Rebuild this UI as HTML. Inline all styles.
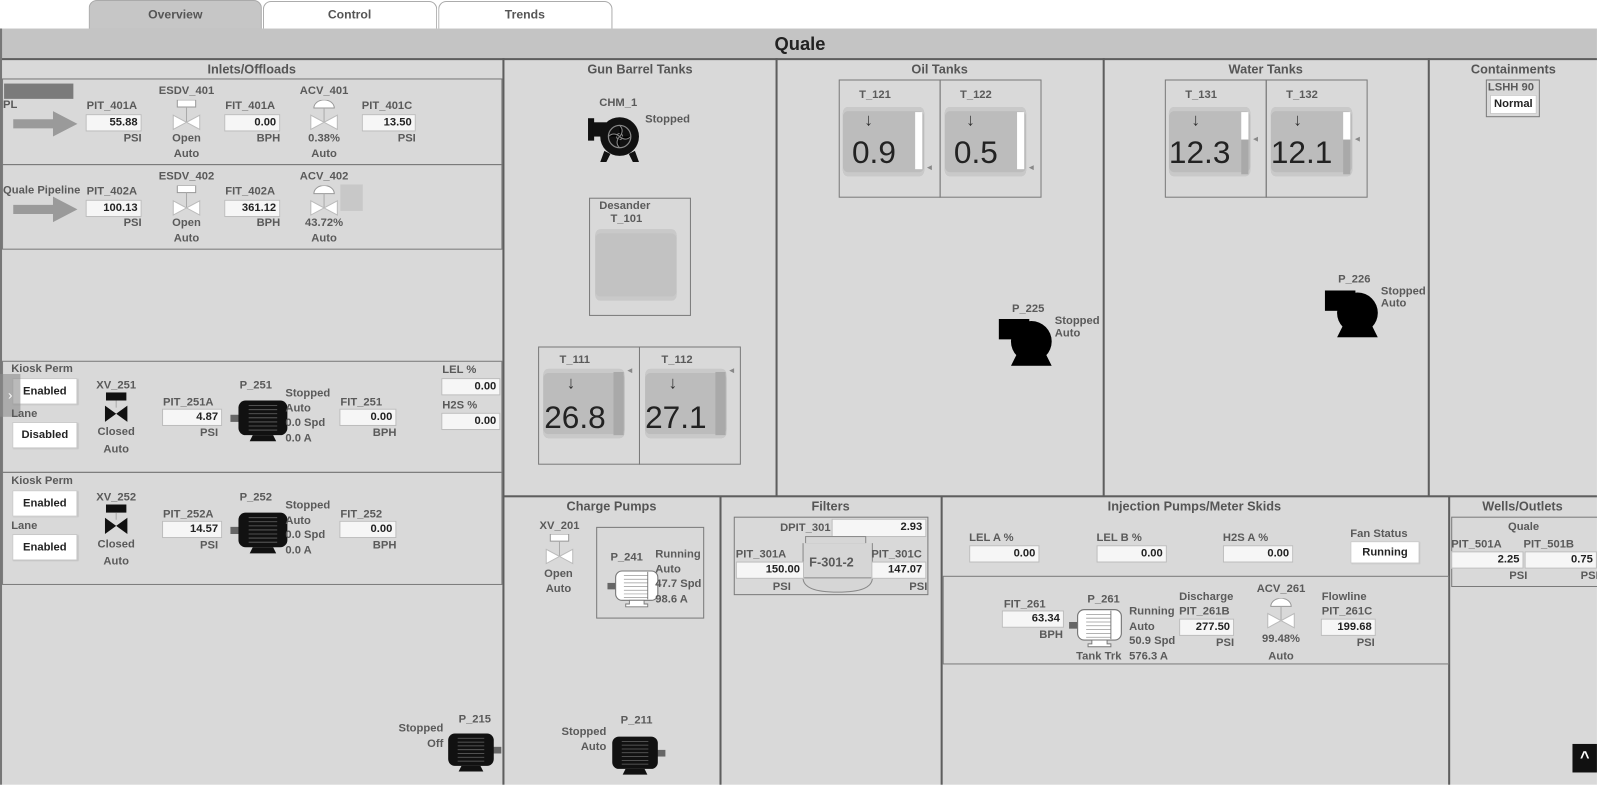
<!DOCTYPE html>
<html><head><meta charset="utf-8">
<style>
html,body{margin:0;padding:0;background:#fff;width:1597px;height:784px;overflow:hidden}
.c{position:absolute;left:0;top:0;width:1567px;height:770px;transform:scale(1.0191,1.0191);transform-origin:0 0;font-family:"Liberation Sans",sans-serif}
.t{position:absolute;font-weight:bold;font-size:11px;line-height:12px;color:#5a5a5a;white-space:nowrap}
.h{position:absolute;font-weight:bold;font-size:12.5px;color:#555;white-space:nowrap;transform:translateX(-50%)}
.ct{transform:translateX(-50%)}
.rt{transform:translateX(-100%)}
.b{position:absolute;background:#f6f6f6;border:1px solid #bcbcbc;box-sizing:border-box;font-weight:bold;font-size:11px;color:#222;text-align:right;padding-right:3px;line-height:14px;height:17px}
.btn{position:absolute;background:#fff;border:1px solid #c8c8c8;box-shadow:1px 1px 1px #bbb;box-sizing:border-box;font-weight:bold;font-size:11px;color:#222;text-align:center}
.ln{position:absolute;background:#5e5e5e}
.bx{position:absolute;border:1px solid #7a7a7a;box-sizing:border-box}
.tank{position:absolute;background:#bcbcbc;border-radius:5px/6px;box-shadow:inset 0 4px 0 #c9c9c9,inset 0 -4px 0 #c9c9c9}
.tv{position:absolute;font-size:31px;color:#222;line-height:31px}
.ar{position:absolute;font-size:17px;color:#333;line-height:17px}
svg{position:absolute;overflow:visible}
</style></head><body>
<svg width="0" height="0" style="position:absolute">
<defs>
<symbol id="mb" viewBox="0 0 60 44"><rect x="0" y="17" width="9" height="7" fill="#666"/><rect x="8" y="3" width="48" height="34" rx="7" fill="#111"/><g stroke="#666" stroke-width="0.8"><line x1="18" y1="8" x2="46" y2="8"/><line x1="18" y1="12" x2="46" y2="12"/><line x1="18" y1="16" x2="46" y2="16"/><line x1="18" y1="20" x2="46" y2="20"/><line x1="18" y1="24" x2="46" y2="24"/><line x1="18" y1="28" x2="46" y2="28"/><line x1="18" y1="32" x2="46" y2="32"/></g><path d="M22 37h20l3 6H19z" fill="#111"/></symbol>
<symbol id="mw" viewBox="0 0 60 44"><rect x="0" y="17" width="9" height="7" fill="#666"/><rect x="9" y="4" width="46" height="32" rx="7" fill="#fff" stroke="#777" stroke-width="1.2"/><g stroke="#999" stroke-width="0.8"><line x1="18" y1="9" x2="44" y2="9"/><line x1="18" y1="13" x2="44" y2="13"/><line x1="18" y1="17" x2="44" y2="17"/><line x1="18" y1="21" x2="44" y2="21"/><line x1="18" y1="25" x2="44" y2="25"/><line x1="18" y1="29" x2="44" y2="29"/><line x1="18" y1="33" x2="44" y2="33"/></g><line x1="44" y1="5" x2="44" y2="35" stroke="#777"/><path d="M24 36h16v4h4v3H20v-3h4z" fill="#fff" stroke="#777"/></symbol>
<symbol id="pc" viewBox="0 0 54 46"><rect x="0" y="0" width="30" height="20" fill="#000"/><circle cx="32" cy="22" r="20" fill="#000"/><path d="M18 34h28l6 12H12z" fill="#000"/></symbol>
<symbol id="vw" viewBox="0 0 28 30"><rect x="5" y="0" width="18" height="7" fill="#fff" stroke="#999"/><line x1="14" y1="7" x2="14" y2="22" stroke="#aaa"/><path d="M1 15L14 22L1 29z M27 15L14 22L27 29z" fill="#fff" stroke="#bbb"/></symbol>
<symbol id="va" viewBox="0 0 28 30"><path d="M4 8A10 8 0 0 1 24 8z" fill="#fff" stroke="#999"/><line x1="14" y1="8" x2="14" y2="22" stroke="#aaa"/><path d="M1 15L14 22L1 29z M27 15L14 22L27 29z" fill="#fff" stroke="#bbb"/></symbol>
<symbol id="vb" viewBox="0 0 28 30"><rect x="4" y="0" width="20" height="8" fill="#111"/><line x1="14" y1="8" x2="14" y2="15" stroke="#aaa"/><path d="M3 13L14 21L3 29z M25 13L14 21L25 29z" fill="#111"/></symbol>
</defs></svg>
<div class="c">
<div style="position:absolute;left:87px;top:0;width:170px;height:29px;background:#c6c6c6;border:1px solid #aaa;border-bottom:none;border-radius:8px 8px 0 0;box-sizing:border-box"></div>
<div style="position:absolute;left:258px;top:1px;width:171px;height:27px;background:#fff;border:1px solid #aaa;border-bottom:none;border-radius:8px 8px 0 0;box-sizing:border-box"></div>
<div style="position:absolute;left:430px;top:1px;width:171px;height:27px;background:#fff;border:1px solid #aaa;border-bottom:none;border-radius:8px 8px 0 0;box-sizing:border-box"></div>
<div class="t ct" style="left:172px;top:8px;font-size:12px;color:#555">Overview</div>
<div class="t ct" style="left:343px;top:8px;font-size:12px;color:#555">Control</div>
<div class="t ct" style="left:515px;top:8px;font-size:12px;color:#555">Trends</div>
<div style="position:absolute;left:0;top:28px;width:1567px;height:29px;background:#c4c4c4;border-left:2px solid #777;box-sizing:border-box"></div>
<div class="t ct" style="left:785px;top:34px;font-size:18px;line-height:18px;color:#222">Quale</div>
<div style="position:absolute;left:0;top:57px;width:1567px;height:713px;background:#d9d9d9"></div>
<div class="ln" style="left:0;top:57px;width:1567px;height:2px"></div>
<div class="ln" style="left:0;top:28px;width:2px;height:742px;background:#777"></div>
<div class="ln" style="left:493px;top:57px;width:2px;height:713px"></div>
<div class="ln" style="left:761px;top:57px;width:2px;height:430px"></div>
<div class="ln" style="left:1082px;top:57px;width:2px;height:430px"></div>
<div class="ln" style="left:1401px;top:57px;width:2px;height:430px"></div>
<div class="ln" style="left:493px;top:486px;width:1074px;height:2px"></div>
<div class="ln" style="left:706px;top:487px;width:2px;height:283px"></div>
<div class="ln" style="left:923px;top:487px;width:2px;height:283px"></div>
<div class="ln" style="left:1421px;top:487px;width:2px;height:283px"></div>
<div class="ln" style="left:2px;top:77px;width:491px;height:1px;background:#777"></div>

<div class="h" style="left:247px;top:61px">Inlets/Offloads</div>
<div class="bx" style="left:2px;top:77px;width:491px;height:85px"></div>
<div class="bx" style="left:2px;top:161px;width:491px;height:84px"></div>
<div style="position:absolute;left:4px;top:82px;width:68px;height:15px;background:#7b7b7b"></div>
<div class="t" style="left:3px;top:97px">PL</div>
<svg style="left:13px;top:109px" width="63" height="25"><path d="M0 8h39v-8l24 12.5-24 12.5v-8H0z" fill="#9a9a9a"/></svg>
<div class="t" style="left:85px;top:98px">PIT_401A</div>
<div class="b" style="left:84px;top:112px;width:55px">55.88</div>
<div class="t rt" style="left:139px;top:130px">PSI</div>
<div class="t ct" style="left:183px;top:83px">ESDV_401</div>
<svg style="left:169px;top:98px" width="28" height="30"><use href="#vw"/></svg>
<div class="t ct" style="left:183px;top:130px">Open</div>
<div class="t ct" style="left:183px;top:145px">Auto</div>
<div class="t" style="left:221px;top:98px">FIT_401A</div>
<div class="b" style="left:220px;top:112px;width:55px">0.00</div>
<div class="t rt" style="left:275px;top:130px">BPH</div>
<div class="t ct" style="left:318px;top:83px">ACV_401</div>
<svg style="left:304px;top:98px" width="28" height="30"><use href="#va"/></svg>
<div class="t ct" style="left:318px;top:130px">0.38%</div>
<div class="t ct" style="left:318px;top:145px">Auto</div>
<div class="t" style="left:355px;top:98px">PIT_401C</div>
<div class="b" style="left:355px;top:112px;width:53px">13.50</div>
<div class="t rt" style="left:408px;top:130px">PSI</div>

<div class="t" style="left:3px;top:181px">Quale Pipeline</div>
<svg style="left:13px;top:193px" width="63" height="25"><path d="M0 8h39v-8l24 12.5-24 12.5v-8H0z" fill="#9a9a9a"/></svg>
<div class="t" style="left:85px;top:182px">PIT_402A</div>
<div class="b" style="left:84px;top:196px;width:55px">100.13</div>
<div class="t rt" style="left:139px;top:213px">PSI</div>
<div class="t ct" style="left:183px;top:167px">ESDV_402</div>
<svg style="left:169px;top:182px" width="28" height="30"><use href="#vw"/></svg>
<div class="t ct" style="left:183px;top:213px">Open</div>
<div class="t ct" style="left:183px;top:228px">Auto</div>
<div class="t" style="left:221px;top:182px">FIT_402A</div>
<div class="b" style="left:220px;top:196px;width:55px">361.12</div>
<div class="t rt" style="left:275px;top:213px">BPH</div>
<div class="t ct" style="left:318px;top:167px">ACV_402</div>
<svg style="left:304px;top:182px" width="28" height="30"><use href="#va"/></svg>
<div style="position:absolute;left:334px;top:181px;width:22px;height:26px;background:#c8c8c8"></div>
<div class="t ct" style="left:318px;top:213px">43.72%</div>
<div class="t ct" style="left:318px;top:228px">Auto</div>

<div class="bx" style="left:2px;top:354px;width:491px;height:110px"></div>
<div class="bx" style="left:2px;top:463px;width:491px;height:111px"></div>
<div class="t" style="left:11px;top:356px">Kiosk Perm</div>
<div class="btn" style="left:12px;top:371px;width:64px;height:26px;line-height:24px">Enabled</div>
<div style="position:absolute;left:0;top:367px;width:20px;height:42px;background:rgba(140,140,140,.6);color:#fff;font-size:13px;line-height:42px;text-align:center">›</div>
<div class="t" style="left:11px;top:400px">Lane</div>
<div class="btn" style="left:12px;top:414px;width:64px;height:26px;line-height:24px">Disabled</div>
<div class="t ct" style="left:114px;top:372px">XV_251</div>
<svg style="left:100px;top:385px" width="28" height="30"><use href="#vb"/></svg>
<div class="t ct" style="left:114px;top:418px">Closed</div>
<div class="t ct" style="left:114px;top:435px">Auto</div>
<div class="t" style="left:160px;top:389px">PIT_251A</div>
<div class="b" style="left:159px;top:401px;width:59px">4.87</div>
<div class="t rt" style="left:214px;top:419px">PSI</div>
<div class="t ct" style="left:251px;top:372px">P_251</div>
<svg style="left:226px;top:390px" width="60" height="44"><use href="#mb"/></svg>
<div class="t" style="left:280px;top:379px;line-height:14.5px">Stopped<br>Auto<br>0.0 Spd<br>0.0 A</div>
<div class="t" style="left:334px;top:389px">FIT_251</div>
<div class="b" style="left:333px;top:401px;width:56px">0.00</div>
<div class="t rt" style="left:389px;top:419px">BPH</div>
<div class="t" style="left:434px;top:357px">LEL %</div>
<div class="b" style="left:433px;top:371px;width:58px">0.00</div>
<div class="t" style="left:434px;top:392px">H2S %</div>
<div class="b" style="left:433px;top:405px;width:58px">0.00</div>

<div class="t" style="left:11px;top:466px">Kiosk Perm</div>
<div class="btn" style="left:12px;top:481px;width:64px;height:26px;line-height:24px">Enabled</div>
<div class="t" style="left:11px;top:510px">Lane</div>
<div class="btn" style="left:12px;top:524px;width:64px;height:26px;line-height:24px">Enabled</div>
<div class="t ct" style="left:114px;top:482px">XV_252</div>
<svg style="left:100px;top:495px" width="28" height="30"><use href="#vb"/></svg>
<div class="t ct" style="left:114px;top:528px">Closed</div>
<div class="t ct" style="left:114px;top:545px">Auto</div>
<div class="t" style="left:160px;top:499px">PIT_252A</div>
<div class="b" style="left:159px;top:511px;width:59px">14.57</div>
<div class="t rt" style="left:214px;top:529px">PSI</div>
<div class="t ct" style="left:251px;top:482px">P_252</div>
<svg style="left:226px;top:500px" width="60" height="44"><use href="#mb"/></svg>
<div class="t" style="left:280px;top:489px;line-height:14.5px">Stopped<br>Auto<br>0.0 Spd<br>0.0 A</div>
<div class="t" style="left:334px;top:499px">FIT_252</div>
<div class="b" style="left:333px;top:511px;width:56px">0.00</div>
<div class="t rt" style="left:389px;top:529px">BPH</div>

<div class="t" style="left:450px;top:700px">P_215</div>
<div class="t rt" style="left:435px;top:709px">Stopped</div>
<div class="t rt" style="left:435px;top:724px">Off</div>
<svg style="left:436px;top:717px;transform:scaleX(-1)" width="56" height="41"><use href="#mb"/></svg>

<div class="h" style="left:628px;top:61px">Gun Barrel Tanks</div>
<div class="t" style="left:588px;top:95px">CHM_1</div>
<div class="t" style="left:633px;top:111px">Stopped</div>
<svg style="left:577px;top:112px" width="56" height="48" viewBox="0 0 56 48"><rect x="0" y="4" width="6" height="22" fill="#111"/><rect x="4" y="8" width="14" height="14" fill="#111"/><circle cx="31" cy="22" r="19" fill="#111"/><circle cx="31" cy="22" r="11" fill="none" stroke="#888" stroke-width="1.2"/><circle cx="31" cy="22" r="3" fill="none" stroke="#888"/><g stroke="#888" stroke-width="1"><path d="M31 11q5 5 0 11M42 22q-5 5-11 0M31 33q-5-5 0-11M20 22q5-5 11 0"/></g><path d="M16 36l-4 11h6l4-8zM46 36l4 11h-6l-4-8z" fill="#111"/></svg>
<div class="bx" style="left:578px;top:194px;width:100px;height:116px"></div>
<div class="t" style="left:588px;top:196px">Desander</div>
<div class="t" style="left:599px;top:209px">T_101</div>
<div class="tank" style="left:584px;top:225px;width:80px;height:70px;background:#c2c2c2"></div>

<div class="bx" style="left:528px;top:340px;width:100px;height:116px"></div>
<div class="bx" style="left:627px;top:340px;width:100px;height:116px"></div>
<div class="t" style="left:549px;top:347px">T_111</div>
<div class="t" style="left:649px;top:347px">T_112</div>
<div class="tank" style="left:533px;top:362px;width:80px;height:68px"></div>
<div style="position:absolute;left:602px;top:365px;width:10px;height:62px;background:#a9a9a9"></div>
<div class="ar" style="left:556px;top:367px">↓</div>
<div class="tv" style="left:534px;top:394px">26.8</div>
<div class="t" style="left:614px;top:358px;font-size:8px;color:#888">◄</div>
<div class="tank" style="left:633px;top:362px;width:80px;height:68px"></div>
<div style="position:absolute;left:702px;top:365px;width:10px;height:62px;background:#a9a9a9"></div>
<div class="ar" style="left:656px;top:367px">↓</div>
<div class="tv" style="left:633px;top:394px">27.1</div>
<div class="t" style="left:714px;top:358px;font-size:8px;color:#888">◄</div>

<div class="h" style="left:922px;top:61px">Oil Tanks</div>
<div class="bx" style="left:823px;top:78px;width:100px;height:116px"></div>
<div class="bx" style="left:922px;top:78px;width:100px;height:116px"></div>
<div class="t" style="left:843px;top:87px">T_121</div>
<div class="t" style="left:942px;top:87px">T_122</div>
<div class="tank" style="left:827px;top:105px;width:80px;height:68px"></div>
<div style="position:absolute;left:898px;top:110px;width:7px;height:56px;background:#fff"></div>
<div class="ar" style="left:848px;top:109px">↓</div>
<div class="tv" style="left:836px;top:134px">0.9</div>
<div class="t" style="left:908px;top:159px;font-size:8px;color:#888">◄</div>
<div class="tank" style="left:927px;top:105px;width:80px;height:68px"></div>
<div style="position:absolute;left:998px;top:110px;width:7px;height:56px;background:#fff"></div>
<div class="ar" style="left:948px;top:109px">↓</div>
<div class="tv" style="left:936px;top:134px">0.5</div>
<div class="t" style="left:1008px;top:159px;font-size:8px;color:#888">◄</div>
<div class="t" style="left:993px;top:297px">P_225</div>
<div class="t" style="left:1035px;top:309px">Stopped<br>Auto</div>
<svg style="left:980px;top:313px" width="54" height="46"><use href="#pc"/></svg>

<div class="h" style="left:1242px;top:61px">Water Tanks</div>
<div class="bx" style="left:1143px;top:78px;width:100px;height:116px"></div>
<div class="bx" style="left:1242px;top:78px;width:100px;height:116px"></div>
<div class="t" style="left:1163px;top:87px">T_131</div>
<div class="t" style="left:1262px;top:87px">T_132</div>
<div class="tank" style="left:1147px;top:105px;width:80px;height:68px"></div>
<div style="position:absolute;left:1218px;top:110px;width:7px;height:27px;background:#fff"></div>
<div style="position:absolute;left:1218px;top:137px;width:7px;height:34px;background:#a9a9a9"></div>
<div class="ar" style="left:1169px;top:109px">↓</div>
<div class="tv" style="left:1147px;top:134px">12.3</div>
<div class="t" style="left:1228px;top:131px;font-size:8px;color:#888">◄</div>
<div class="tank" style="left:1247px;top:105px;width:80px;height:68px"></div>
<div style="position:absolute;left:1318px;top:110px;width:7px;height:27px;background:#fff"></div>
<div style="position:absolute;left:1318px;top:137px;width:7px;height:34px;background:#a9a9a9"></div>
<div class="ar" style="left:1269px;top:109px">↓</div>
<div class="tv" style="left:1247px;top:134px">12.1</div>
<div class="t" style="left:1328px;top:131px;font-size:8px;color:#888">◄</div>
<div class="t" style="left:1313px;top:268px">P_226</div>
<div class="t" style="left:1355px;top:280px">Stopped<br>Auto</div>
<svg style="left:1300px;top:285px" width="54" height="46"><use href="#pc"/></svg>

<div class="h" style="left:1485px;top:61px">Containments</div>
<div class="bx" style="left:1458px;top:78px;width:53px;height:37px"></div>
<div class="t" style="left:1460px;top:80px">LSHH 90</div>
<div class="btn" style="left:1462px;top:93px;width:46px;height:19px;line-height:17px;box-shadow:none">Normal</div>

<div class="h" style="left:600px;top:490px">Charge Pumps</div>
<div class="t ct" style="left:549px;top:510px">XV_201</div>
<svg style="left:535px;top:524px" width="28" height="30"><use href="#vw"/></svg>
<div class="t ct" style="left:548px;top:557px">Open</div>
<div class="t ct" style="left:548px;top:572px">Auto</div>
<div class="bx" style="left:585px;top:517px;width:106px;height:90px"></div>
<div class="t" style="left:599px;top:541px">P_241</div>
<svg style="left:596px;top:556px" width="54" height="41"><use href="#mw"/></svg>
<div class="t" style="left:643px;top:537px;line-height:14.5px">Running<br>Auto<br>47.7 Spd<br>98.6 A</div>
<div class="t" style="left:609px;top:701px">P_211</div>
<div class="t rt" style="left:595px;top:712px">Stopped</div>
<div class="t rt" style="left:595px;top:727px">Auto</div>
<svg style="left:597px;top:720px;transform:scaleX(-1)" width="56" height="41"><use href="#mb"/></svg>

<div class="h" style="left:815px;top:490px">Filters</div>
<div class="bx" style="left:720px;top:507px;width:191px;height:77px"></div>
<div class="t rt" style="left:815px;top:512px">DPIT_301</div>
<div class="b" style="left:816px;top:509px;width:93px;height:18px">2.93</div>
<div style="position:absolute;left:790px;top:526px;width:60px;height:8px;border:1px solid #888;box-sizing:border-box;background:#d6d6d6"></div>
<svg style="left:787px;top:533px" width="70" height="50"><path d="M1 0v34q0 14 34 14q34 0 34-14V0" fill="#d6d6d6" stroke="#888"/><line x1="1" y1="34" x2="69" y2="34" stroke="#888"/></svg>
<div class="t" style="left:794px;top:546px;font-size:12.5px">F-301-2</div>
<div class="t" style="left:722px;top:538px">PIT_301A</div>
<div class="b" style="left:722px;top:551px;width:67px">150.00</div>
<div class="t rt" style="left:776px;top:570px">PSI</div>
<div class="t" style="left:855px;top:538px">PIT_301C</div>
<div class="b" style="left:855px;top:551px;width:54px">147.07</div>
<div class="t rt" style="left:910px;top:570px">PSI</div>

<div class="h" style="left:1172px;top:490px">Injection Pumps/Meter Skids</div>
<div class="t" style="left:951px;top:522px">LEL A %</div>
<div class="b" style="left:951px;top:535px;width:69px">0.00</div>
<div class="t" style="left:1076px;top:522px">LEL B %</div>
<div class="b" style="left:1076px;top:535px;width:69px">0.00</div>
<div class="t" style="left:1200px;top:522px">H2S A %</div>
<div class="b" style="left:1200px;top:535px;width:69px">0.00</div>
<div class="t" style="left:1325px;top:518px">Fan Status</div>
<div class="btn" style="left:1325px;top:531px;width:68px;height:22px;line-height:20px">Running</div>
<div class="bx" style="left:925px;top:565px;width:497px;height:87px"></div>
<div class="t" style="left:985px;top:587px">FIT_261</div>
<div class="b" style="left:983px;top:599px;width:61px">63.34</div>
<div class="t rt" style="left:1043px;top:617px">BPH</div>
<div class="t" style="left:1067px;top:582px">P_261</div>
<svg style="left:1049px;top:594px" width="56" height="42"><use href="#mw"/></svg>
<div class="t" style="left:1056px;top:638px">Tank Trk</div>
<div class="t" style="left:1108px;top:593px;line-height:14.5px">Running<br>Auto<br>50.9 Spd<br>576.3 A</div>
<div class="t" style="left:1157px;top:580px">Discharge</div>
<div class="t" style="left:1157px;top:594px">PIT_261B</div>
<div class="b" style="left:1157px;top:607px;width:54px">277.50</div>
<div class="t rt" style="left:1211px;top:625px">PSI</div>
<div class="t ct" style="left:1257px;top:572px">ACV_261</div>
<svg style="left:1243px;top:587px" width="28" height="30"><use href="#va"/></svg>
<div class="t ct" style="left:1257px;top:621px">99.48%</div>
<div class="t ct" style="left:1257px;top:638px">Auto</div>
<div class="t" style="left:1297px;top:580px">Flowline</div>
<div class="t" style="left:1297px;top:594px">PIT_261C</div>
<div class="b" style="left:1296px;top:607px;width:54px">199.68</div>
<div class="t rt" style="left:1349px;top:625px">PSI</div>

<div class="h" style="left:1494px;top:490px">Wells/Outlets</div>
<div class="bx" style="left:1424px;top:507px;width:145px;height:69px"></div>
<div class="t ct" style="left:1495px;top:511px">Quale</div>
<div class="t" style="left:1424px;top:528px">PIT_501A</div>
<div class="t" style="left:1495px;top:528px">PIT_501B</div>
<div class="b" style="left:1424px;top:541px;width:71px">2.25</div>
<div class="b" style="left:1496px;top:541px;width:71px">0.75</div>
<div class="t" style="left:1481px;top:559px">PSI</div>
<div class="t" style="left:1551px;top:559px">PSI</div>

<div style="position:absolute;left:1543px;top:730px;width:24px;height:28px;background:#111;color:#fff;font-size:16px;text-align:center;line-height:28px;font-weight:bold">^</div>
</div>
</body></html>
